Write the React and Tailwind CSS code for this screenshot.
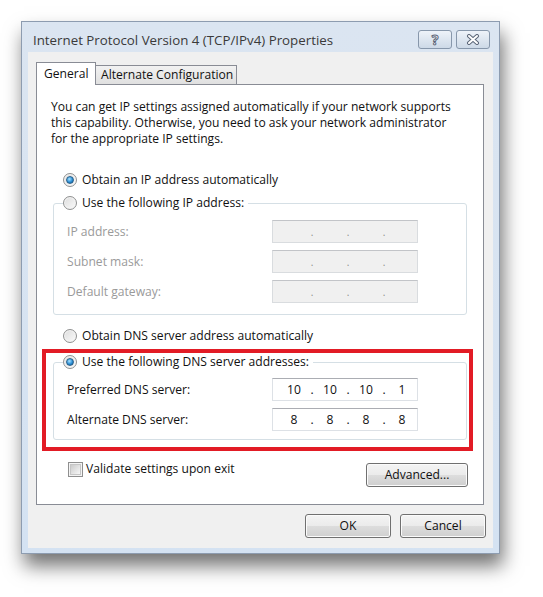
import React, { Fragment } from "react";

function Radio({ checked }) {
  return (
    <span className="flex h-[14px] w-[14px] shrink-0 items-center justify-center rounded-full border border-[#8f9090] bg-[linear-gradient(135deg,#dcdcdc,#fbfbfb)] shadow-[inset_0_0_0_1px_#f4f4f4]">
      {checked && (
        <span className="h-[8px] w-[8px] rounded-full border border-[#2c628b] bg-[radial-gradient(circle_at_40%_35%,#a9e2ff,#2b8fd6_55%,#0d4e88)]" />
      )}
    </span>
  );
}

function Checkbox() {
  return (
    <span className="flex h-[15px] w-[15px] shrink-0 items-center justify-center border border-[#8f8f8f] bg-[#f4f4f4]">
      <span className="h-[11px] w-[11px] border border-[#c6c6c6] bg-[linear-gradient(135deg,#cbcbcb,#f7f7f7)]" />
    </span>
  );
}

function IPField({ values, disabled }) {
  const v = values || ["", "", "", ""];
  return (
    <div
      className={`flex h-[23px] w-[146px] items-center border pl-[6px] ${
        disabled
          ? "border-[#d9dcdf] border-t-[#c2c4c8] bg-[#f0f0f0] text-[#8d8d8d]"
          : "border-[#dde1e6] border-t-[#abadb3] bg-white text-[#111]"
      }`}
    >
      {v.map((x, i) => (
        <Fragment key={i}>
          <span className="w-[30px] text-center">{x}</span>
          {i < 3 && (
            <span className={`w-[6px] text-center ${disabled ? "text-[10px]" : ""}`}>.</span>
          )}
        </Fragment>
      ))}
    </div>
  );
}

function Btn({ children, className = "" }) {
  return (
    <div
      className={`flex h-[24px] items-center justify-center rounded-[3px] border border-[#707070] bg-[linear-gradient(#f4f4f4_0%,#ebebeb_50%,#dddddd_51%,#cfcfcf_100%)] text-[#111] shadow-[inset_0_0_0_1px_#fbfbfb] ${className}`}
    >
      {children}
    </div>
  );
}

function Row({ label, values, disabled }) {
  return (
    <div className="flex h-[23px] items-center pl-[13px]">
      <span className={`w-[205px] ${disabled ? "text-[#9a9a9a]" : "text-[#111]"}`}>{label}</span>
      <IPField values={values} disabled={disabled} />
    </div>
  );
}

export default function App() {
  return (
    <div className="min-h-[597px] bg-white pl-[21px] pt-[21px] font-['Open_Sans',sans-serif] text-[12.1px] leading-[16px] text-[#111]">
      <div className="flex w-[479px] flex-col border border-[#8d9cb0] bg-[linear-gradient(#dbe5f1,#d4e2f2)] px-[6px] pb-[5px] shadow-[3px_12px_18px_rgba(0,0,0,0.55)]">
        {/* title bar */}
        <div className="flex h-[30px] items-start justify-between pl-[5px] pr-[3px]">
          <span className="mt-[10px] text-[13.3px] text-[#3a3a3a]">Internet Protocol Version 4 (TCP/IPv4) Properties</span>
          <div className="mt-[8px] flex gap-[4px]">
            <div className="flex h-[19px] w-[34px] items-center justify-center rounded-[3px] border border-[#8797ab] bg-[linear-gradient(#eef3f9,#cdd9e7)]">
              <span className="text-[14px] font-bold leading-none text-white [-webkit-text-stroke:1px_#5b6678]">?</span>
            </div>
            <div className="flex h-[19px] w-[34px] items-center justify-center rounded-[3px] border border-[#8797ab] bg-[linear-gradient(#eef3f9,#cdd9e7)]">
              <svg width="14" height="11" viewBox="0 0 14 11">
                <path d="M3 2 L11 9 M11 2 L3 9" stroke="#5b6678" strokeWidth="4" strokeLinecap="round" />
                <path d="M3 2 L11 9 M11 2 L3 9" stroke="#ffffff" strokeWidth="2" strokeLinecap="round" />
              </svg>
            </div>
          </div>
        </div>

        {/* client area */}
        <div className="flex flex-col bg-[#f0f0f0] pb-[10px] pl-[8px] pr-[9px] pt-[10px]">
          {/* tabs */}
          <div className="flex items-end">
            <div className="relative z-10 -mb-px flex h-[23px] w-[60px] items-start border border-b-0 border-[#898c95] bg-white pl-[7px] pt-[3px]">
              General
            </div>
            <div className="flex h-[19px] w-[141px] items-center whitespace-nowrap border border-l-0 border-b-0 border-[#898c95] bg-[linear-gradient(#f2f2f2,#e0e0e0)] pl-[5px]">
              Alternate Configuration
            </div>
          </div>

          {/* panel */}
          <div className="relative flex flex-col border border-[#898c95] bg-white pb-[17px]">
            <p className="whitespace-nowrap pl-[14px] pt-[14px]">
              You can get IP settings assigned automatically if your network supports
              <br />
              this capability. Otherwise, you need to ask your network administrator
              <br />
              for the appropriate IP settings.
            </p>

            <div className="mt-[25px] flex h-[16px] items-center gap-[5px] pl-[26px]">
              <Radio checked />
              <span>Obtain an IP address automatically</span>
            </div>

            <fieldset className="ml-[16px] mr-[16px] mt-[7px] rounded-[3px] border border-[#d5dfe5] pb-[11px]">
              <legend className="ml-[9px] pr-[4px]">
                <span className="flex h-[16px] items-center gap-[5px]">
                  <Radio />
                  <span>Use the following IP address:</span>
                </span>
              </legend>
              <div className="mt-[9px] flex flex-col gap-[7px]">
                <Row label="IP address:" disabled />
                <Row label="Subnet mask:" disabled />
                <Row label="Default gateway:" disabled />
              </div>
            </fieldset>

            <div className="mt-[13px] flex h-[16px] items-center gap-[5px] pl-[26px]">
              <Radio />
              <span>Obtain DNS server address automatically</span>
            </div>

            <fieldset className="ml-[16px] mr-[16px] mt-[10px] rounded-[3px] border border-[#d5dfe5] pb-[8px]">
              <legend className="ml-[9px] pr-[4px]">
                <span className="flex h-[16px] items-center gap-[5px]">
                  <Radio checked />
                  <span>Use the following DNS server addresses:</span>
                </span>
              </legend>
              <div className="mt-[8px] flex flex-col gap-[7px]">
                <Row label="Preferred DNS server:" values={["10", "10", "10", "1"]} />
                <Row label="Alternate DNS server:" values={["8", "8", "8", "8"]} />
              </div>
            </fieldset>

            <div className="mt-[21px] flex items-start justify-between pl-[31px] pr-[15px]">
              <div className="flex h-[16px] items-center gap-[3px]">
                <Checkbox />
                <span>Validate settings upon exit</span>
              </div>
              <Btn className="mt-[2px] w-[102px]">Advanced...</Btn>
            </div>

            {/* highlight */}
            <div className="pointer-events-none absolute left-[5px] top-[264px] h-[102px] w-[431px] border-[4px] border-[#e21b25]" />
          </div>

          {/* buttons */}
          <div className="-mr-[2px] mt-[9px] flex justify-end gap-[9px]">
            <Btn className="w-[86px]">OK</Btn>
            <Btn className="w-[86px]">Cancel</Btn>
          </div>
        </div>
      </div>
    </div>
  );
}
